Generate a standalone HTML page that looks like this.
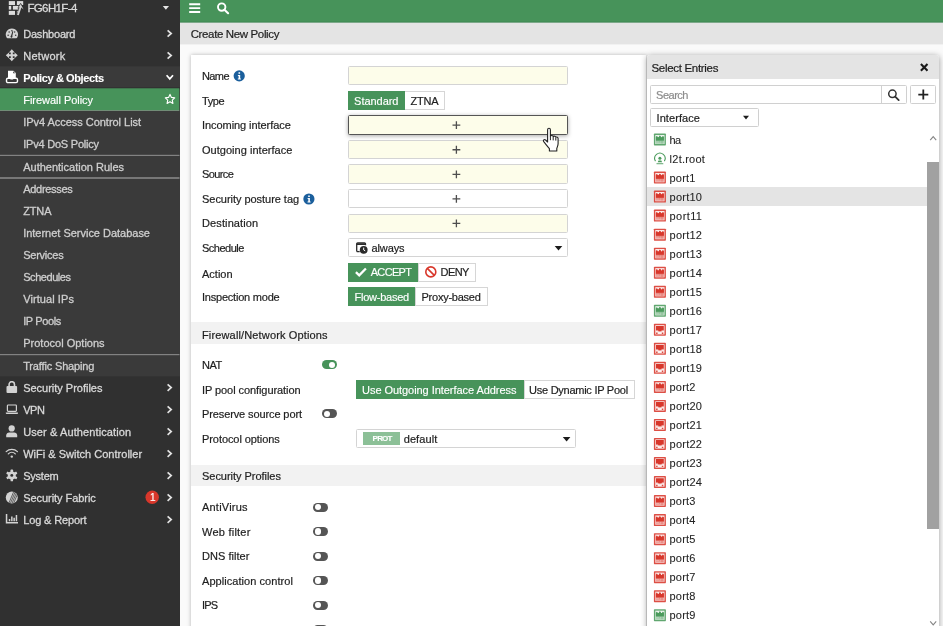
<!DOCTYPE html>
<html><head><meta charset="utf-8"><title>FortiGate - Create New Policy</title>
<style>
*{box-sizing:border-box;margin:0;padding:0}
html,body{width:943px;height:626px;overflow:hidden;background:#fafafa}
body{font-family:"Liberation Sans",sans-serif;font-size:11px;line-height:11px;color:#1e1e1e;position:relative}
#w{position:absolute;left:0;top:0;width:943px;height:626px;will-change:transform}
.a{position:absolute}
.t{position:absolute;white-space:pre}
#card{position:absolute;left:191px;top:55px;width:454.5px;height:600px;background:#fff;box-shadow:0 0 4px rgba(0,0,0,.28)}
.box{position:absolute;left:348px;width:219.8px;height:19.2px;border:1px solid #d4d4d4;border-radius:1.5px;background:#fdfdea}
.box.w{background:#fff}
.pl{position:absolute;width:8px;height:8px}
.pl:before,.pl:after{content:"";position:absolute;background:#505050}
.pl:before{left:0;top:3.35px;width:8px;height:1.3px}
.pl:after{left:3.35px;top:0;width:1.3px;height:8px}
.b{position:absolute;height:18.9px;border:1px solid #d6d6d6;background:#fff}
.b.on{background:#47935a;border-color:#47935a}
.band{position:absolute;left:191px;width:454.5px;background:#f2f2f2}
.tg{position:absolute;width:14.6px;height:9px;border-radius:4.5px;background:#555}
.tg:after{content:"";position:absolute;left:1.5px;top:1.4px;width:6.2px;height:6.2px;border-radius:50%;background:#fff}
.tg.on{background:#47935a}
.tg.on:after{left:6.9px}
#panel{position:absolute;left:647px;top:55px;width:292px;height:600px;background:#fff;border-radius:3px 3px 0 0;box-shadow:0 1.5px 6px rgba(0,0,0,.38);overflow:hidden}
.ib{position:absolute;border:1px solid #d0d0d0;border-radius:1.5px;background:#fff}
</style></head>
<body>
<svg class="a" style="left:0;top:0;width:943px;height:626px" viewBox="0 0 943 626"><rect x="0" y="0" width="180" height="626" fill="#303030"/><rect x="0" y="66.30" width="180" height="310.10" fill="#3a3a3a"/><rect x="0" y="87.60" width="180" height="0.8" fill="#2a2a2a"/><rect x="0" y="88.30" width="179.300" height="22.00" fill="#47935a"/><rect x="0" y="110.20" width="179.300" height="0.8" fill="#7f9a84"/><rect x="0" y="154.80" width="179.500" height="1.2" fill="#828282"/><rect x="0" y="177.15" width="179.500" height="1.7" fill="#828282"/><rect x="0" y="354.00" width="179.500" height="1.2" fill="#828282"/><rect x="180" y="22.300" width="763" height="1.1" fill="#c4c4c4"/><rect x="180" y="0" width="763" height="22.300" fill="#47935a"/><rect x="180" y="21.700" width="763" height="0.700" fill="#3b8650"/><rect x="180" y="23.100" width="763" height="21.300" fill="#e4e4e4"/></svg>
<svg class="a" style="left:8px;top:1px;width:17px;height:15px" viewBox="-0.800 -0.100 17.000 15.000"><g fill="#dcdcdc"><rect x="0" y="0" width="6.200" height="3.900"/><rect x="8.100" y="0" width="6.300" height="3.900"/><rect x="0" y="4.800" width="2.400" height="3.700"/><rect x="4.100" y="4.800" width="6.100" height="3.700"/><rect x="0" y="9.800" width="6.200" height="4"/><rect x="8.100" y="9.800" width="2.300" height="4"/></g><path d="M9.300 13.900L11.900 6" fill="none" stroke="#303030" stroke-width="3"/><path d="M11.800 2.700L9.400 7l2.500-1 3.100 2.600z" fill="#303030" stroke="#303030" stroke-width="1.200" stroke-linejoin="round"/><path d="M9.100 13.900L11.900 5.600" fill="none" stroke="#d2d2d2" stroke-width="1.900"/><path d="M11.800 2.800L9.500 6.900l2.400-.9 2.900 2.400z" fill="#d2d2d2"/></svg>
<svg class="a" style="left:162px;top:6px;width:9px;height:5px" viewBox="-0.800 0.000 9.000 5.000"><path d="M0 0h6.200L3.100 3.800z" fill="#e6e6e6"/></svg>
<svg class="a" style="left:5px;top:28px;width:14px;height:12px" viewBox="-0.800 -0.500 14.000 12.000"><path d="M6.1 0A6.1 6.1 0 0 0 .9 9.3c.2.3.4.5.8.5h8.8c.4 0 .6-.2.8-.5A6.1 6.1 0 0 0 6.1 0z" fill="#d2d2d2"/><g fill="#303030"><circle cx="2.3" cy="6.7" r=".75"/><circle cx="3.3" cy="3.5" r=".75"/><circle cx="9.9" cy="6.7" r=".75"/><circle cx="8.9" cy="3.5" r=".7"/><circle cx="6.1" cy="2.2" r=".7"/><path d="M5.2 7.2l1.5-4.6.8.3-1 4.6a1 1 0 1 1-1.3-.3z"/></g></svg>
<svg class="a" style="left:166px;top:29px;width:8px;height:10px" viewBox="-0.600 -0.500 8.000 10.000"><path d="M1 .8L4.6 4 1 7.2" fill="none" stroke="#e2e2e2" stroke-width="1.7"/></svg>
<svg class="a" style="left:5px;top:49px;width:14px;height:14px" viewBox="-0.800 -0.300 14.000 14.000"><path d="M6 0l2.900 3.200H7v1.800h1.800V3.100L12 6 8.800 8.900V7H7v1.800h1.900L6 12 3.100 8.800H5V7H3.200v1.900L0 6l3.200-2.900V5H5V3.200H3.100z" fill="#d2d2d2"/></svg>
<svg class="a" style="left:166px;top:51px;width:8px;height:10px" viewBox="-0.600 -0.500 8.000 10.000"><path d="M1 .8L4.6 4 1 7.2" fill="none" stroke="#e2e2e2" stroke-width="1.7"/></svg>
<svg class="a" style="left:5px;top:70px;width:15px;height:15px" viewBox="-0.800 -0.700 15.000 15.000"><path d="M2.2 0h5.4l2.400 2.400v5.200H7.400v1.300H4.600V7.600H2.200z" fill="#fff"/><path d="M7.400.600v2h2z" fill="#3a3a3a"/><rect x=".7" y="7.600" width="11" height="4.300" rx="1.400" fill="none" stroke="#fff" stroke-width="1.400"/></svg>
<svg class="a" style="left:165px;top:74px;width:10px;height:8px" viewBox="-0.800 -0.300 10.000 8.000"><path d="M.8 1L4 4.600 7.200 1" fill="none" stroke="#fff" stroke-width="1.700"/></svg>
<svg class="a" style="left:164px;top:93px;width:13px;height:13px" viewBox="-0.190 -0.189 12.328 12.304"><path d="M5.500 1.100l1.350 2.900 3.100.4-2.300 2.150.6 3.100L5.500 8.100 2.750 9.650l.6-3.100L1.050 4.400l3.100-.4z" fill="none" stroke="#fff" stroke-width="1.100" stroke-linejoin="round"/></svg>
<svg class="a" style="left:6px;top:381px;width:13px;height:13px" viewBox="-0.500 0.000 13.000 13.000"><path d="M2.600 5.200V3.400a2.700 2.700 0 0 1 5.400 0v1.800" fill="none" stroke="#d2d2d2" stroke-width="1.600"/><rect x="0" y="5" width="10.600" height="7" rx="1" fill="#d2d2d2"/></svg>
<svg class="a" style="left:166px;top:383px;width:8px;height:10px" viewBox="-0.600 -0.600 8.000 10.000"><path d="M1 .8L4.6 4 1 7.2" fill="none" stroke="#e2e2e2" stroke-width="1.7"/></svg>
<svg class="a" style="left:5px;top:404px;width:14px;height:12px" viewBox="-0.800 -0.400 14.000 12.000"><rect x="1.600" y=".600" width="9" height="6.400" rx=".8" fill="none" stroke="#d2d2d2" stroke-width="1.200"/><path d="M0 8.200h12.200v.5c0 .6-.5 1-1 1H1c-.5 0-1-.4-1-1z" fill="#d2d2d2"/></svg>
<svg class="a" style="left:166px;top:405px;width:8px;height:10px" viewBox="-0.600 -0.600 8.000 10.000"><path d="M1 .8L4.6 4 1 7.2" fill="none" stroke="#e2e2e2" stroke-width="1.7"/></svg>
<svg class="a" style="left:6px;top:425px;width:13px;height:14px" viewBox="-0.200 -0.200 13.000 14.000"><circle cx="5.500" cy="3.200" r="3.100" fill="#d2d2d2"/><path d="M0 12V10.400C0 8.600 1.400 7.400 3 7.400h5c1.600 0 3 1.200 3 3V12z" fill="#d2d2d2"/></svg>
<svg class="a" style="left:166px;top:427px;width:8px;height:10px" viewBox="-0.600 -0.600 8.000 10.000"><path d="M1 .8L4.6 4 1 7.2" fill="none" stroke="#e2e2e2" stroke-width="1.7"/></svg>
<svg class="a" style="left:5px;top:448px;width:14px;height:11px" viewBox="-0.600 -0.400 14.000 11.000"><path d="M.600 3.200a8 8 0 0 1 11.200 0" fill="none" stroke="#d2d2d2" stroke-width="1.300" stroke-linecap="round"/><path d="M2.700 5.500a5 5 0 0 1 7 0" fill="none" stroke="#d2d2d2" stroke-width="1.300" stroke-linecap="round"/><circle cx="6.200" cy="8.200" r="1.200" fill="#d2d2d2"/></svg>
<svg class="a" style="left:166px;top:449px;width:8px;height:10px" viewBox="-0.600 -0.600 8.000 10.000"><path d="M1 .8L4.6 4 1 7.2" fill="none" stroke="#e2e2e2" stroke-width="1.7"/></svg>
<svg class="a" style="left:6px;top:469px;width:13px;height:14px" viewBox="-6.000 -6.400 13.448 14.000"><g fill="#d2d2d2"><circle r="4.100"/><rect id="t" x="-1.300" y="-6" width="2.600" height="12" rx=".6"/><use href="#t" transform="rotate(60)"/><use href="#t" transform="rotate(120)"/></g><circle r="1.500" fill="#303030"/></svg>
<svg class="a" style="left:166px;top:471px;width:8px;height:10px" viewBox="-0.600 -0.600 8.000 10.000"><path d="M1 .8L4.6 4 1 7.2" fill="none" stroke="#e2e2e2" stroke-width="1.7"/></svg>
<svg class="a" style="left:5px;top:491px;width:14px;height:14px" viewBox="-0.800 -0.400 14.000 14.000"><defs><clipPath id="cc"><circle cx="6" cy="6" r="6"/></clipPath></defs><circle cx="6" cy="6" r="6" fill="#d2d2d2"/><g clip-path="url(#cc)" stroke="#303030" stroke-width=".7"><path d="M3 12L8 0M4.600 12L9.600 0M6.200 12L11.200 0M7.800 12L12.800 0"/></g></svg>
<svg class="a" style="left:145px;top:490px;width:15px;height:15px" viewBox="-0.500 -0.500 15.000 15.000"><circle cx="6.700" cy="6.700" r="6.700" fill="#d8372b"/></svg>
<svg class="a" style="left:166px;top:493px;width:8px;height:10px" viewBox="-0.600 -0.600 8.000 10.000"><path d="M1 .8L4.6 4 1 7.2" fill="none" stroke="#e2e2e2" stroke-width="1.7"/></svg>
<svg class="a" style="left:5px;top:514px;width:14px;height:11px" viewBox="-0.800 0.000 14.000 11.000"><path d="M0 0h1.500v8.100h10.700v1.500H0z" fill="#d2d2d2"/><path d="M3 5h1.500v2.200H3zM5.300 2.600h1.500v4.600H5.300zM7.600 3.800h1.500v3.400H7.600zM9.900 1h1.500v6.200H9.900z" fill="#d2d2d2"/></svg>
<svg class="a" style="left:166px;top:515px;width:8px;height:10px" viewBox="-0.600 -0.600 8.000 10.000"><path d="M1 .8L4.6 4 1 7.2" fill="none" stroke="#e2e2e2" stroke-width="1.7"/></svg>
<svg class="a" style="left:189px;top:3px;width:13px;height:11px" viewBox="-0.200 -0.300 13.000 11.000"><path d="M0 0h11v1.900H0zM0 3.850h11v1.900H0zM0 7.700h11v1.900H0z" fill="#fff"/></svg><svg class="a" style="left:217px;top:2px;width:13px;height:13px" viewBox="0.000 -0.400 13.000 13.000"><circle cx="4.700" cy="4.700" r="3.700" fill="none" stroke="#fff" stroke-width="1.900"/><path d="M7.400 7.300l3.700 3.500" stroke="#fff" stroke-width="2.100" stroke-linecap="round"/></svg>
<div id="card"></div>
<svg class="a" style="left:233px;top:70px;width:13px;height:13px" viewBox="-0.600 -0.300 13.000 13.000"><circle cx="5.600" cy="5.600" r="5.600" fill="#1b5f9c"/><path d="M4.900 2h1.600v1.500H4.900zM4.300 4.600h2.300v3.500h.7v1H4.200v-1h.8V5.600h-.7z" fill="#fff"/></svg>
<svg class="a" style="left:303px;top:193px;width:13px;height:13px" viewBox="-0.300 -0.400 13.000 13.000"><circle cx="5.600" cy="5.600" r="5.600" fill="#1b5f9c"/><path d="M4.900 2h1.600v1.500H4.900zM4.300 4.600h2.300v3.500h.7v1H4.200v-1h.8V5.600h-.7z" fill="#fff"/></svg>
<div class="box" style="top:66.20px;"></div>
<div class="b" style="left:404.4px;top:91.30px;width:40.3px;height:18.9px"></div>
<div class="b on" style="left:348.1px;top:91.30px;width:56.5px;height:18.9px"></div>
<div class="box" style="top:115.200px;height:19.500px;border-color:#555;box-shadow:0 1px 4px rgba(0,0,0,.34)"></div>
<div class="box" style="top:139.88px;"></div>
<div class="box" style="top:164.44px;"></div>
<div class="box w" style="top:189.00px;"></div>
<div class="box" style="top:213.56px;"></div>
<svg class="a" style="left:452px;top:121px;width:10px;height:10px" viewBox="-0.500 -0.300 10.000 10.000"><path d="M3.900 0v7.800M0 3.900h7.800" stroke="#4e4e4e" stroke-width="1.300"/></svg>
<svg class="a" style="left:452px;top:145px;width:10px;height:10px" viewBox="-0.500 -0.860 10.000 10.000"><path d="M3.900 0v7.800M0 3.900h7.800" stroke="#4e4e4e" stroke-width="1.300"/></svg>
<svg class="a" style="left:452px;top:170px;width:10px;height:10px" viewBox="-0.500 -0.420 10.000 10.000"><path d="M3.900 0v7.800M0 3.900h7.800" stroke="#4e4e4e" stroke-width="1.300"/></svg>
<svg class="a" style="left:452px;top:194px;width:10px;height:10px" viewBox="-0.500 -0.980 10.000 10.000"><path d="M3.900 0v7.800M0 3.900h7.800" stroke="#4e4e4e" stroke-width="1.300"/></svg>
<svg class="a" style="left:452px;top:219px;width:10px;height:10px" viewBox="-0.500 -0.540 10.000 10.000"><path d="M3.900 0v7.800M0 3.900h7.800" stroke="#4e4e4e" stroke-width="1.300"/></svg>
<div class="box w" style="top:238.12px;"></div>
<svg class="a" style="left:356px;top:242px;width:13px;height:13px" viewBox="-0.100 -0.200 13.000 13.000"><path d="M.6 9.400V1.600c0-.6.4-1 1-1h6.800c.6 0 1 .4 1 1V3" fill="none" stroke="#2a2a2a" stroke-width="1.300"/><path d="M.6 1h8.800v1.800H.6z" fill="#2a2a2a"/><path d="M.6 9.400h3" stroke="#2a2a2a" stroke-width="1.300"/><circle cx="7.600" cy="7.600" r="3.900" fill="#2a2a2a"/><path d="M7.600 5.400v2.400l1.500.9" fill="none" stroke="#fff" stroke-width="1"/></svg>
<svg class="a" style="left:554px;top:246px;width:10px;height:6px" viewBox="-0.700 0.000 10.000 6.000"><path d="M0 0h7.600L3.800 4.400z" fill="#1c1c1c"/></svg>
<div class="b" style="left:418.2px;top:262.70px;width:57.5px;height:18.9px"></div>
<div class="b on" style="left:348.1px;top:262.70px;width:70.3px;height:18.9px"></div>
<svg class="a" style="left:354px;top:267px;width:15px;height:11px" viewBox="-0.600 -0.300 15.000 11.000"><path d="M1.300 4.900l3.300 3.100 6.700-6.800" fill="none" stroke="#fff" stroke-width="2.300"/></svg>
<svg class="a" style="left:424px;top:265px;width:14px;height:14px" viewBox="-0.800 -0.900 14.000 14.000"><circle cx="6" cy="6" r="5" fill="none" stroke="#d8372b" stroke-width="1.600"/><path d="M2.500 2.500l7 7" stroke="#d8372b" stroke-width="1.600"/></svg>
<div class="b" style="left:415.3px;top:287.40px;width:72.3px;height:18.9px"></div>
<div class="b on" style="left:348.1px;top:287.40px;width:67.4px;height:18.9px"></div>
<div class="band" style="top:322.100px;height:21.900px"></div>
<div class="band" style="top:464.600px;height:21.500px"></div>
<div class="tg on" style="left:322.200px;top:360.300px"></div>
<div class="b" style="left:523.8px;top:380.20px;width:110.9px;height:18.9px"></div>
<div class="b on" style="left:356.2px;top:380.20px;width:167.8px;height:18.9px"></div>
<div class="tg" style="left:322.200px;top:409.400px"></div>
<div class="box w" style="left:356.200px;width:219.400px;top:429.300px;height:19px"></div>
<div class="a" style="left:363.100px;top:432.300px;width:36.900px;height:12.900px;background:#8cc097"></div>
<svg class="a" style="left:562px;top:437px;width:10px;height:6px" viewBox="-0.800 0.000 10.000 6.000"><path d="M0 0h7.600L3.800 4.400z" fill="#1c1c1c"/></svg>
<div class="tg" style="left:313.100px;top:502.50px"></div>
<div class="tg" style="left:313.100px;top:527.00px"></div>
<div class="tg" style="left:313.100px;top:551.50px"></div>
<div class="tg" style="left:313.100px;top:576.00px"></div>
<div class="tg" style="left:313.100px;top:600.50px"></div>
<div class="tg" style="left:313.100px;top:625.00px"></div>
<div id="panel">
<div class="a" style="left:0.00px;top:0.00px;width:293px;height:23.600px;background:#e4e4e4"></div>
<svg class="a" style="left:272px;top:8px;width:11px;height:10px" viewBox="-0.900 -0.100 11.000 10.000"><path d="M1 1l6.600 6.600M7.600 1L1 7.600" stroke="#1a1a1a" stroke-width="2.100"/></svg>
<div class="ib" style="left:2.90px;top:30.00px;width:257px;height:18.800px"><div class="a" style="left:230.400px;top:0;width:1px;height:100%;background:#d0d0d0"></div><svg class="a" style="left:236px;top:3px;width:14px;height:13px" viewBox="-0.600 0.000 14.000 13.000"><circle cx="4.800" cy="4.800" r="3.700" fill="none" stroke="#333" stroke-width="1.500"/><path d="M7.600 7.600l3.500 3.500" stroke="#333" stroke-width="1.800" stroke-linecap="round"/></svg></div>
<div class="ib" style="left:263.40px;top:30.00px;width:25.200px;height:18.800px"><svg class="a" style="left:7px;top:3px;width:12px;height:12px" viewBox="-0.300 -0.600 12.000 12.000"><path d="M5 0v10M0 5h10" stroke="#222" stroke-width="1.800"/></svg></div>
<div class="ib" style="left:2.90px;top:53.40px;width:109.400px;height:18.400px"><svg class="a" style="left:92px;top:6px;width:7px;height:6px" viewBox="0.000 -0.800 7.000 6.000"><path d="M0 0h6L3 3.600z" fill="#1c1c1c"/></svg></div>
<svg class="a" style="left:6px;top:78px;width:14px;height:14px" viewBox="-0.900 -0.500 14.000 14.000"><rect width="12" height="12" rx=".7" fill="#4b9b5c" opacity=".88"/><path d="M1.400 1.400h9.200v9.200H1.400z" fill="#fff" opacity=".88"/><path d="M2 10.200V3.500l1-1.100.900 1.300h.900l.400-.800.800-.800.800.800.400.800h.900l.900-1.300 1 1.100v6.700z" fill="#4b9b5c" opacity=".62"/><path d="M2 7.100V3.500l1-1.100.900 1.300h.900l.400-.800.800-.800.800.800.400.800h.900l.900-1.300 1 1.100v3.600z" fill="#4b9b5c"/><path d="M2 8.400h3.400M5.900 8.400h1.300M7.700 8.400h.8M9 8.400h1M2 9.600h5.200M7.700 9.600h.8M9 9.600h1" stroke="#fff" stroke-width=".55" opacity=".7"/></svg>
<svg class="a" style="left:6px;top:97px;width:14px;height:14px" viewBox="-0.900 -0.530 14.000 14.000"><path d="M1.600 8.600A5.200 5.200 0 1 1 10.400 8.600" fill="none" stroke="#4b9b5c" stroke-width="1.100"/><circle cx="6" cy="5.600" r="1.500" fill="#4b9b5c"/><path d="M3.800 9.600l.8-1.600h2.800l.8 1.600z" fill="#4b9b5c"/><path d="M2.600 11.200h6.800" stroke="#4b9b5c" stroke-width=".9"/></svg>
<svg class="a" style="left:6px;top:116px;width:14px;height:14px" viewBox="-0.900 -0.560 14.000 14.000"><rect width="12" height="12" rx=".7" fill="#d8372b" opacity=".88"/><path d="M1.400 1.400h9.200v9.200H1.400z" fill="#fff" opacity=".88"/><path d="M2 10.200V3.500l1-1.100.900 1.300h.900l.400-.800.800-.800.800.800.400.800h.900l.900-1.300 1 1.100v6.700z" fill="#d8372b" opacity=".62"/><path d="M2 7.100V3.500l1-1.100.900 1.300h.900l.400-.800.800-.800.800.800.400.800h.900l.900-1.300 1 1.100v3.600z" fill="#d8372b"/><path d="M2 8.400h3.400M5.900 8.400h1.300M7.700 8.400h.8M9 8.400h1M2 9.600h5.200M7.700 9.600h.8M9 9.600h1" stroke="#fff" stroke-width=".55" opacity=".7"/></svg>
<div class="a" style="left:-0.50px;top:132.29px;width:281px;height:18.500px;background:#e4e4e4"></div>
<svg class="a" style="left:6px;top:135px;width:14px;height:14px" viewBox="-0.900 -0.590 14.000 14.000"><rect width="12" height="12" rx=".7" fill="#d8372b" opacity=".88"/><path d="M1.400 1.400h9.200v9.200H1.400z" fill="#fff" opacity=".88"/><path d="M2 10.200V3.500l1-1.100.900 1.300h.900l.400-.800.800-.800.800.800.400.800h.900l.900-1.300 1 1.100v6.700z" fill="#d8372b" opacity=".62"/><path d="M2 7.100V3.500l1-1.100.900 1.300h.900l.400-.800.800-.800.800.800.400.800h.900l.900-1.300 1 1.100v3.600z" fill="#d8372b"/><path d="M2 8.400h3.400M5.900 8.400h1.300M7.700 8.400h.8M9 8.400h1M2 9.600h5.200M7.700 9.600h.8M9 9.600h1" stroke="#fff" stroke-width=".55" opacity=".7"/></svg>
<svg class="a" style="left:6px;top:154px;width:14px;height:14px" viewBox="-0.900 -0.620 14.000 14.000"><rect width="12" height="12" rx=".7" fill="#d8372b" opacity=".88"/><path d="M1.400 1.400h9.200v9.200H1.400z" fill="#fff" opacity=".88"/><path d="M2 10.200V3.500l1-1.100.900 1.300h.900l.400-.800.800-.800.800.800.400.800h.900l.900-1.300 1 1.100v6.700z" fill="#d8372b" opacity=".62"/><path d="M2 7.100V3.500l1-1.100.900 1.300h.900l.400-.800.800-.800.800.800.400.800h.900l.900-1.300 1 1.100v3.600z" fill="#d8372b"/><path d="M2 8.400h3.400M5.900 8.400h1.300M7.700 8.400h.8M9 8.400h1M2 9.600h5.200M7.700 9.600h.8M9 9.600h1" stroke="#fff" stroke-width=".55" opacity=".7"/></svg>
<svg class="a" style="left:6px;top:173px;width:14px;height:14px" viewBox="-0.900 -0.650 14.000 14.000"><rect width="12" height="12" rx=".7" fill="#d8372b" opacity=".88"/><path d="M1.400 1.400h9.200v9.200H1.400z" fill="#fff" opacity=".88"/><path d="M2 10.200V3.500l1-1.100.900 1.300h.900l.400-.800.800-.800.800.800.400.800h.900l.900-1.300 1 1.100v6.700z" fill="#d8372b" opacity=".62"/><path d="M2 7.100V3.500l1-1.100.900 1.300h.900l.400-.800.800-.800.800.800.400.800h.900l.900-1.300 1 1.100v3.600z" fill="#d8372b"/><path d="M2 8.400h3.400M5.900 8.400h1.300M7.700 8.400h.8M9 8.400h1M2 9.600h5.200M7.700 9.600h.8M9 9.600h1" stroke="#fff" stroke-width=".55" opacity=".7"/></svg>
<svg class="a" style="left:6px;top:192px;width:14px;height:14px" viewBox="-0.900 -0.680 14.000 14.000"><rect width="12" height="12" rx=".7" fill="#d8372b" opacity=".88"/><path d="M1.400 1.400h9.200v9.200H1.400z" fill="#fff" opacity=".88"/><path d="M2 10.200V3.500l1-1.100.900 1.300h.900l.400-.800.800-.800.800.800.400.800h.900l.900-1.300 1 1.100v6.700z" fill="#d8372b" opacity=".62"/><path d="M2 7.100V3.500l1-1.100.900 1.300h.900l.400-.800.800-.800.800.800.400.800h.900l.900-1.300 1 1.100v3.600z" fill="#d8372b"/><path d="M2 8.400h3.400M5.900 8.400h1.300M7.700 8.400h.8M9 8.400h1M2 9.600h5.200M7.700 9.600h.8M9 9.600h1" stroke="#fff" stroke-width=".55" opacity=".7"/></svg>
<svg class="a" style="left:6px;top:211px;width:14px;height:14px" viewBox="-0.900 -0.710 14.000 14.000"><rect width="12" height="12" rx=".7" fill="#d8372b" opacity=".88"/><path d="M1.400 1.400h9.200v9.200H1.400z" fill="#fff" opacity=".88"/><path d="M2 10.200V3.500l1-1.100.900 1.300h.900l.400-.800.800-.800.800.800.400.800h.900l.900-1.300 1 1.100v6.700z" fill="#d8372b" opacity=".62"/><path d="M2 7.100V3.500l1-1.100.900 1.300h.900l.400-.800.800-.800.800.800.400.800h.900l.900-1.300 1 1.100v3.600z" fill="#d8372b"/><path d="M2 8.400h3.400M5.900 8.400h1.300M7.700 8.400h.8M9 8.400h1M2 9.600h5.200M7.700 9.600h.8M9 9.600h1" stroke="#fff" stroke-width=".55" opacity=".7"/></svg>
<svg class="a" style="left:6px;top:230px;width:14px;height:14px" viewBox="-0.900 -0.740 14.000 14.000"><rect width="12" height="12" rx=".7" fill="#d8372b" opacity=".88"/><path d="M1.400 1.400h9.200v9.200H1.400z" fill="#fff" opacity=".88"/><path d="M2 10.200V3.500l1-1.100.900 1.300h.900l.400-.800.800-.800.800.800.400.800h.900l.900-1.300 1 1.100v6.700z" fill="#d8372b" opacity=".62"/><path d="M2 7.100V3.500l1-1.100.900 1.300h.900l.400-.800.800-.800.800.800.400.800h.900l.900-1.300 1 1.100v3.600z" fill="#d8372b"/><path d="M2 8.400h3.400M5.900 8.400h1.300M7.700 8.400h.8M9 8.400h1M2 9.600h5.200M7.700 9.600h.8M9 9.600h1" stroke="#fff" stroke-width=".55" opacity=".7"/></svg>
<svg class="a" style="left:6px;top:249px;width:14px;height:14px" viewBox="-0.900 -0.770 14.000 14.000"><rect width="12" height="12" rx=".7" fill="#4b9b5c" opacity=".88"/><path d="M1.400 1.400h9.200v9.200H1.400z" fill="#fff" opacity=".88"/><path d="M2 10.200V3.500l1-1.100.900 1.300h.900l.400-.800.800-.800.800.800.400.800h.900l.900-1.300 1 1.100v6.700z" fill="#4b9b5c" opacity=".62"/><path d="M2 7.100V3.500l1-1.100.900 1.300h.900l.400-.800.800-.800.800.800.400.800h.900l.900-1.300 1 1.100v3.600z" fill="#4b9b5c"/><path d="M2 8.400h3.400M5.900 8.400h1.300M7.700 8.400h.8M9 8.400h1M2 9.600h5.200M7.700 9.600h.8M9 9.600h1" stroke="#fff" stroke-width=".55" opacity=".7"/></svg>
<svg class="a" style="left:6px;top:268px;width:14px;height:14px" viewBox="-0.900 -0.800 14.000 14.000"><rect width="12" height="12" rx=".7" fill="#d8372b" opacity=".88"/><path d="M1.400 1.400h9.200v9.200H1.400z" fill="#fff" opacity=".92"/><path d="M2.100 2.100h7.800v4.300H8.300Q6 8.300 3.700 6.400H2.100z" fill="#d8372b"/><path d="M2.100 6.400h1.600Q6 8.300 8.300 6.400h1.600v.9l-1.200-.1Q6 9.300 3.300 7.200l-1.200.1z" fill="#d8372b" opacity=".4"/><path d="M2.200 8.700h1.500v1.400H2.200zM7.900 8.700h1.500v1.400H7.900z" fill="#d8372b" opacity=".9"/></svg>
<svg class="a" style="left:6px;top:287px;width:14px;height:14px" viewBox="-0.900 -0.830 14.000 14.000"><rect width="12" height="12" rx=".7" fill="#d8372b" opacity=".88"/><path d="M1.400 1.400h9.200v9.200H1.400z" fill="#fff" opacity=".92"/><path d="M2.100 2.100h7.800v4.300H8.300Q6 8.300 3.700 6.400H2.100z" fill="#d8372b"/><path d="M2.100 6.400h1.600Q6 8.300 8.300 6.400h1.600v.9l-1.200-.1Q6 9.300 3.300 7.200l-1.200.1z" fill="#d8372b" opacity=".4"/><path d="M2.200 8.700h1.500v1.400H2.200zM7.900 8.700h1.500v1.400H7.900z" fill="#d8372b" opacity=".9"/></svg>
<svg class="a" style="left:6px;top:306px;width:14px;height:14px" viewBox="-0.900 -0.860 14.000 14.000"><rect width="12" height="12" rx=".7" fill="#d8372b" opacity=".88"/><path d="M1.400 1.400h9.200v9.200H1.400z" fill="#fff" opacity=".92"/><path d="M2.100 2.100h7.800v4.300H8.300Q6 8.300 3.700 6.400H2.100z" fill="#d8372b"/><path d="M2.100 6.400h1.600Q6 8.300 8.300 6.400h1.600v.9l-1.200-.1Q6 9.300 3.300 7.200l-1.200.1z" fill="#d8372b" opacity=".4"/><path d="M2.200 8.700h1.500v1.400H2.200zM7.900 8.700h1.500v1.400H7.900z" fill="#d8372b" opacity=".9"/></svg>
<svg class="a" style="left:6px;top:325px;width:14px;height:14px" viewBox="-0.900 -0.890 14.000 14.000"><rect width="12" height="12" rx=".7" fill="#d8372b" opacity=".88"/><path d="M1.400 1.400h9.200v9.200H1.400z" fill="#fff" opacity=".88"/><path d="M2 10.200V3.500l1-1.100.900 1.300h.900l.400-.800.800-.800.800.800.400.800h.900l.900-1.300 1 1.100v6.700z" fill="#d8372b" opacity=".62"/><path d="M2 7.100V3.500l1-1.100.900 1.300h.900l.400-.800.800-.800.800.800.400.800h.900l.900-1.300 1 1.100v3.600z" fill="#d8372b"/><path d="M2 8.400h3.400M5.900 8.400h1.300M7.700 8.400h.8M9 8.400h1M2 9.600h5.200M7.700 9.600h.8M9 9.600h1" stroke="#fff" stroke-width=".55" opacity=".7"/></svg>
<svg class="a" style="left:6px;top:344px;width:14px;height:14px" viewBox="-0.900 -0.920 14.000 14.000"><rect width="12" height="12" rx=".7" fill="#d8372b" opacity=".88"/><path d="M1.400 1.400h9.200v9.200H1.400z" fill="#fff" opacity=".92"/><path d="M2.100 2.100h7.800v4.300H8.300Q6 8.300 3.700 6.400H2.100z" fill="#d8372b"/><path d="M2.100 6.400h1.600Q6 8.300 8.300 6.400h1.600v.9l-1.200-.1Q6 9.300 3.300 7.200l-1.200.1z" fill="#d8372b" opacity=".4"/><path d="M2.200 8.700h1.500v1.400H2.200zM7.900 8.700h1.500v1.400H7.900z" fill="#d8372b" opacity=".9"/></svg>
<svg class="a" style="left:6px;top:363px;width:14px;height:14px" viewBox="-0.900 -0.950 14.000 14.000"><rect width="12" height="12" rx=".7" fill="#d8372b" opacity=".88"/><path d="M1.400 1.400h9.200v9.200H1.400z" fill="#fff" opacity=".92"/><path d="M2.100 2.100h7.800v4.300H8.300Q6 8.300 3.700 6.400H2.100z" fill="#d8372b"/><path d="M2.100 6.400h1.600Q6 8.300 8.300 6.400h1.600v.9l-1.200-.1Q6 9.300 3.300 7.200l-1.200.1z" fill="#d8372b" opacity=".4"/><path d="M2.200 8.700h1.500v1.400H2.200zM7.900 8.700h1.500v1.400H7.900z" fill="#d8372b" opacity=".9"/></svg>
<svg class="a" style="left:6px;top:382px;width:14px;height:14px" viewBox="-0.900 -0.980 14.000 14.000"><rect width="12" height="12" rx=".7" fill="#d8372b" opacity=".88"/><path d="M1.400 1.400h9.200v9.200H1.400z" fill="#fff" opacity=".92"/><path d="M2.100 2.100h7.800v4.300H8.300Q6 8.300 3.700 6.400H2.100z" fill="#d8372b"/><path d="M2.100 6.400h1.600Q6 8.300 8.300 6.400h1.600v.9l-1.200-.1Q6 9.300 3.300 7.200l-1.200.1z" fill="#d8372b" opacity=".4"/><path d="M2.200 8.700h1.500v1.400H2.200zM7.900 8.700h1.500v1.400H7.900z" fill="#d8372b" opacity=".9"/></svg>
<svg class="a" style="left:6px;top:402px;width:14px;height:14px" viewBox="-0.900 -0.010 14.000 14.000"><rect width="12" height="12" rx=".7" fill="#d8372b" opacity=".88"/><path d="M1.400 1.400h9.200v9.200H1.400z" fill="#fff" opacity=".92"/><path d="M2.100 2.100h7.800v4.300H8.300Q6 8.300 3.700 6.400H2.100z" fill="#d8372b"/><path d="M2.100 6.400h1.600Q6 8.300 8.300 6.400h1.600v.9l-1.200-.1Q6 9.300 3.300 7.200l-1.200.1z" fill="#d8372b" opacity=".4"/><path d="M2.200 8.700h1.500v1.400H2.200zM7.900 8.700h1.500v1.400H7.900z" fill="#d8372b" opacity=".9"/></svg>
<svg class="a" style="left:6px;top:421px;width:14px;height:14px" viewBox="-0.900 -0.040 14.000 14.000"><rect width="12" height="12" rx=".7" fill="#d8372b" opacity=".88"/><path d="M1.400 1.400h9.200v9.200H1.400z" fill="#fff" opacity=".92"/><path d="M2.100 2.100h7.800v4.300H8.300Q6 8.300 3.700 6.400H2.100z" fill="#d8372b"/><path d="M2.100 6.400h1.600Q6 8.300 8.300 6.400h1.600v.9l-1.200-.1Q6 9.300 3.300 7.200l-1.200.1z" fill="#d8372b" opacity=".4"/><path d="M2.200 8.700h1.500v1.400H2.200zM7.900 8.700h1.500v1.400H7.900z" fill="#d8372b" opacity=".9"/></svg>
<svg class="a" style="left:6px;top:440px;width:14px;height:14px" viewBox="-0.900 -0.070 14.000 14.000"><rect width="12" height="12" rx=".7" fill="#d8372b" opacity=".88"/><path d="M1.400 1.400h9.200v9.200H1.400z" fill="#fff" opacity=".88"/><path d="M2 10.200V3.500l1-1.100.900 1.300h.900l.400-.800.800-.800.800.800.400.800h.900l.900-1.300 1 1.100v6.700z" fill="#d8372b" opacity=".62"/><path d="M2 7.100V3.500l1-1.100.900 1.300h.900l.400-.800.800-.800.800.800.400.800h.900l.900-1.300 1 1.100v3.600z" fill="#d8372b"/><path d="M2 8.400h3.400M5.900 8.400h1.300M7.700 8.400h.8M9 8.400h1M2 9.600h5.200M7.700 9.600h.8M9 9.600h1" stroke="#fff" stroke-width=".55" opacity=".7"/></svg>
<svg class="a" style="left:6px;top:459px;width:14px;height:14px" viewBox="-0.900 -0.100 14.000 14.000"><rect width="12" height="12" rx=".7" fill="#d8372b" opacity=".88"/><path d="M1.400 1.400h9.200v9.200H1.400z" fill="#fff" opacity=".88"/><path d="M2 10.200V3.500l1-1.100.900 1.300h.900l.400-.800.800-.800.800.800.400.800h.900l.900-1.300 1 1.100v6.700z" fill="#d8372b" opacity=".62"/><path d="M2 7.100V3.500l1-1.100.900 1.300h.900l.400-.800.800-.800.800.800.400.800h.900l.900-1.300 1 1.100v3.600z" fill="#d8372b"/><path d="M2 8.400h3.400M5.900 8.400h1.300M7.700 8.400h.8M9 8.400h1M2 9.600h5.200M7.700 9.600h.8M9 9.600h1" stroke="#fff" stroke-width=".55" opacity=".7"/></svg>
<svg class="a" style="left:6px;top:478px;width:14px;height:14px" viewBox="-0.900 -0.130 14.000 14.000"><rect width="12" height="12" rx=".7" fill="#d8372b" opacity=".88"/><path d="M1.400 1.400h9.200v9.200H1.400z" fill="#fff" opacity=".88"/><path d="M2 10.200V3.500l1-1.100.900 1.300h.900l.400-.800.800-.800.800.800.400.800h.900l.900-1.300 1 1.100v6.700z" fill="#d8372b" opacity=".62"/><path d="M2 7.100V3.500l1-1.100.900 1.300h.900l.400-.800.800-.800.800.800.400.800h.900l.900-1.300 1 1.100v3.600z" fill="#d8372b"/><path d="M2 8.400h3.400M5.900 8.400h1.300M7.700 8.400h.8M9 8.400h1M2 9.600h5.200M7.700 9.600h.8M9 9.600h1" stroke="#fff" stroke-width=".55" opacity=".7"/></svg>
<svg class="a" style="left:6px;top:497px;width:14px;height:14px" viewBox="-0.900 -0.160 14.000 14.000"><rect width="12" height="12" rx=".7" fill="#d8372b" opacity=".88"/><path d="M1.400 1.400h9.200v9.200H1.400z" fill="#fff" opacity=".88"/><path d="M2 10.200V3.500l1-1.100.900 1.300h.900l.400-.800.800-.800.800.800.400.800h.900l.900-1.300 1 1.100v6.700z" fill="#d8372b" opacity=".62"/><path d="M2 7.100V3.500l1-1.100.900 1.300h.900l.400-.800.800-.800.800.800.400.800h.900l.900-1.300 1 1.100v3.600z" fill="#d8372b"/><path d="M2 8.400h3.400M5.900 8.400h1.300M7.700 8.400h.8M9 8.400h1M2 9.600h5.200M7.700 9.600h.8M9 9.600h1" stroke="#fff" stroke-width=".55" opacity=".7"/></svg>
<svg class="a" style="left:6px;top:516px;width:14px;height:14px" viewBox="-0.900 -0.190 14.000 14.000"><rect width="12" height="12" rx=".7" fill="#d8372b" opacity=".88"/><path d="M1.400 1.400h9.200v9.200H1.400z" fill="#fff" opacity=".88"/><path d="M2 10.200V3.500l1-1.100.900 1.300h.900l.400-.800.800-.800.800.800.400.800h.900l.900-1.300 1 1.100v6.700z" fill="#d8372b" opacity=".62"/><path d="M2 7.100V3.500l1-1.100.900 1.300h.900l.400-.800.800-.800.800.800.400.800h.900l.900-1.300 1 1.100v3.600z" fill="#d8372b"/><path d="M2 8.400h3.400M5.900 8.400h1.300M7.700 8.400h.8M9 8.400h1M2 9.600h5.200M7.700 9.600h.8M9 9.600h1" stroke="#fff" stroke-width=".55" opacity=".7"/></svg>
<svg class="a" style="left:6px;top:535px;width:14px;height:14px" viewBox="-0.900 -0.220 14.000 14.000"><rect width="12" height="12" rx=".7" fill="#d8372b" opacity=".88"/><path d="M1.400 1.400h9.200v9.200H1.400z" fill="#fff" opacity=".88"/><path d="M2 10.200V3.500l1-1.100.900 1.300h.900l.400-.800.800-.800.800.800.400.800h.900l.900-1.300 1 1.100v6.700z" fill="#d8372b" opacity=".62"/><path d="M2 7.100V3.500l1-1.100.900 1.300h.900l.400-.800.800-.800.800.800.400.800h.900l.900-1.300 1 1.100v3.600z" fill="#d8372b"/><path d="M2 8.400h3.400M5.900 8.400h1.300M7.700 8.400h.8M9 8.400h1M2 9.600h5.200M7.700 9.600h.8M9 9.600h1" stroke="#fff" stroke-width=".55" opacity=".7"/></svg>
<svg class="a" style="left:6px;top:554px;width:14px;height:14px" viewBox="-0.900 -0.250 14.000 14.000"><rect width="12" height="12" rx=".7" fill="#4b9b5c" opacity=".88"/><path d="M1.400 1.400h9.200v9.200H1.400z" fill="#fff" opacity=".88"/><path d="M2 10.200V3.500l1-1.100.900 1.300h.900l.400-.800.800-.800.800.800.400.800h.900l.900-1.300 1 1.100v6.700z" fill="#4b9b5c" opacity=".62"/><path d="M2 7.100V3.500l1-1.100.900 1.300h.900l.400-.800.800-.800.800.800.400.800h.900l.900-1.300 1 1.100v3.600z" fill="#4b9b5c"/><path d="M2 8.400h3.400M5.900 8.400h1.300M7.700 8.400h.8M9 8.400h1M2 9.600h5.200M7.700 9.600h.8M9 9.600h1" stroke="#fff" stroke-width=".55" opacity=".7"/></svg>
<div class="a" style="left:280.00px;top:106.90px;width:12px;height:367.300px;background:#a1a1a1"></div>
<svg class="a" style="left:282px;top:80px;width:9px;height:7px" viewBox="-0.700 -0.700 9.000 7.000"><path d="M.5 4.400L3.500 1l3 3.400" fill="none" stroke="#858585" stroke-width="1.100"/></svg>
<svg class="a" style="left:282px;top:565px;width:9px;height:7px" viewBox="-0.700 -0.800 9.000 7.000"><path d="M.5 .6L3.500 4l3-3.400" fill="none" stroke="#858585" stroke-width="1.100"/></svg>
</div>
<svg class="a" style="left:542px;top:127px;width:19px;height:26px" viewBox="-0.400 -0.400 19.000 26.000"><path d="M5.200 14.600V2.400c0-2 2.800-2 2.800 0v6.400c.6-1 2.600-.8 2.800.4.8-.8 2.400-.5 2.600.7.900-.6 2.300 0 2.300 1.300v5c0 2-.9 3.400-1.300 4.800v2.600H7v-2.300C5.600 19.500 3 16.400 1.300 14.300.3 13 1.800 11.500 3.200 12.600z" fill="#fff" stroke="#222" stroke-width="1.100" stroke-linejoin="round"/><path d="M8 8.800v4M10.800 9.600v3.400M13.400 10.400v2.800" stroke="#222" stroke-width="1"/></svg>
<div id="w">
<span class="t" style="left:27.4px;top:3px;color:#dadada;font-size:11.5px;line-height:11.5px;letter-spacing:-0.618px;-webkit-text-stroke:.3px;">FG6H1F-4</span>
<span class="t" style="left:23.2px;top:29px;color:#d8d8d8;letter-spacing:-0.204px;-webkit-text-stroke:.3px;">Dashboard</span>
<span class="t" style="left:23.2px;top:51px;color:#d8d8d8;letter-spacing:0.293px;-webkit-text-stroke:.3px;">Network</span>
<span class="t" style="left:23.2px;top:73px;color:#fff;font-weight:700;letter-spacing:-0.394px;-webkit-text-stroke:.1px;">Policy &amp; Objects</span>
<span class="t" style="left:23.2px;top:95px;color:#fff;letter-spacing:-0.028px;-webkit-text-stroke:.15px;">Firewall Policy</span>
<span class="t" style="left:23.2px;top:117px;color:#cecece;letter-spacing:-0.031px;-webkit-text-stroke:.3px;">IPv4 Access Control List</span>
<span class="t" style="left:23.2px;top:139px;color:#cecece;letter-spacing:-0.212px;-webkit-text-stroke:.3px;">IPv4 DoS Policy</span>
<span class="t" style="left:23.2px;top:162px;color:#cecece;letter-spacing:-0.0px;-webkit-text-stroke:.3px;">Authentication Rules</span>
<span class="t" style="left:23.2px;top:184px;color:#cecece;letter-spacing:-0.286px;-webkit-text-stroke:.3px;">Addresses</span>
<span class="t" style="left:23.2px;top:206px;color:#cecece;letter-spacing:-0.145px;-webkit-text-stroke:.3px;">ZTNA</span>
<span class="t" style="left:23.2px;top:228px;color:#cecece;letter-spacing:-0.016px;-webkit-text-stroke:.3px;">Internet Service Database</span>
<span class="t" style="left:23.2px;top:250px;color:#cecece;letter-spacing:-0.241px;-webkit-text-stroke:.3px;">Services</span>
<span class="t" style="left:23.2px;top:272px;color:#cecece;letter-spacing:-0.447px;-webkit-text-stroke:.3px;">Schedules</span>
<span class="t" style="left:23.2px;top:294px;color:#cecece;letter-spacing:0.076px;-webkit-text-stroke:.3px;">Virtual IPs</span>
<span class="t" style="left:23.2px;top:316px;color:#cecece;letter-spacing:-0.369px;-webkit-text-stroke:.3px;">IP Pools</span>
<span class="t" style="left:23.2px;top:338px;color:#cecece;letter-spacing:0.005px;-webkit-text-stroke:.3px;">Protocol Options</span>
<span class="t" style="left:23.2px;top:361px;color:#cecece;letter-spacing:-0.155px;-webkit-text-stroke:.3px;">Traffic Shaping</span>
<span class="t" style="left:23.2px;top:383px;color:#d8d8d8;letter-spacing:-0.012px;-webkit-text-stroke:.3px;">Security Profiles</span>
<span class="t" style="left:23.2px;top:405px;color:#d8d8d8;letter-spacing:-0.413px;-webkit-text-stroke:.3px;">VPN</span>
<span class="t" style="left:23.2px;top:427px;color:#d8d8d8;letter-spacing:0.105px;-webkit-text-stroke:.3px;">User &amp; Authentication</span>
<span class="t" style="left:23.2px;top:449px;color:#d8d8d8;letter-spacing:0.014px;-webkit-text-stroke:.3px;">WiFi &amp; Switch Controller</span>
<span class="t" style="left:23.2px;top:471px;color:#d8d8d8;letter-spacing:-0.237px;-webkit-text-stroke:.3px;">System</span>
<span class="t" style="left:23.2px;top:493px;color:#d8d8d8;letter-spacing:-0.054px;-webkit-text-stroke:.3px;">Security Fabric</span>
<span class="t" style="left:149.9px;top:493px;color:#fff;font-size:10px;line-height:10px;letter-spacing:0px;-webkit-text-stroke:.15px;">1</span>
<span class="t" style="left:23.2px;top:515px;color:#d8d8d8;letter-spacing:-0.139px;-webkit-text-stroke:.3px;">Log &amp; Report</span>
<span class="t" style="left:190.7px;top:29px;color:#1e1e1e;font-size:11.5px;line-height:11.5px;letter-spacing:-0.368px;-webkit-text-stroke:.2px;">Create New Policy</span>
<span class="t" style="left:202.0px;top:71px;color:#1e1e1e;letter-spacing:-0.615px;-webkit-text-stroke:.2px;">Name</span>
<span class="t" style="left:202.0px;top:96px;color:#1e1e1e;letter-spacing:-0.386px;-webkit-text-stroke:.2px;">Type</span>
<span class="t" style="left:202.0px;top:120px;color:#1e1e1e;letter-spacing:-0.064px;-webkit-text-stroke:.2px;">Incoming interface</span>
<span class="t" style="left:202.0px;top:145px;color:#1e1e1e;letter-spacing:0.03px;-webkit-text-stroke:.2px;">Outgoing interface</span>
<span class="t" style="left:202.0px;top:169px;color:#1e1e1e;letter-spacing:-0.592px;-webkit-text-stroke:.2px;">Source</span>
<span class="t" style="left:202.0px;top:194px;color:#1e1e1e;letter-spacing:-0.039px;-webkit-text-stroke:.2px;">Security posture tag</span>
<span class="t" style="left:202.0px;top:218px;color:#1e1e1e;letter-spacing:0.115px;-webkit-text-stroke:.2px;">Destination</span>
<span class="t" style="left:202.0px;top:243px;color:#1e1e1e;letter-spacing:-0.496px;-webkit-text-stroke:.2px;">Schedule</span>
<span class="t" style="left:202.0px;top:269px;color:#1e1e1e;letter-spacing:0.004px;-webkit-text-stroke:.2px;">Action</span>
<span class="t" style="left:202.0px;top:292px;color:#1e1e1e;letter-spacing:-0.216px;-webkit-text-stroke:.2px;">Inspection mode</span>
<span class="t" style="left:354.1px;top:96px;color:#fff;letter-spacing:-0.037px;-webkit-text-stroke:.15px;">Standard</span>
<span class="t" style="left:410.4px;top:96px;color:#1e1e1e;letter-spacing:-0.211px;-webkit-text-stroke:.2px;">ZTNA</span>
<span class="t" style="left:371.4px;top:243px;color:#1e1e1e;letter-spacing:-0.085px;-webkit-text-stroke:.2px;">always</span>
<span class="t" style="left:370.7px;top:267px;color:#fff;letter-spacing:-0.665px;-webkit-text-stroke:.15px;">ACCEPT</span>
<span class="t" style="left:440.5px;top:267px;color:#1e1e1e;letter-spacing:-0.554px;-webkit-text-stroke:.2px;">DENY</span>
<span class="t" style="left:354.6px;top:292px;color:#fff;letter-spacing:-0.251px;-webkit-text-stroke:.15px;">Flow-based</span>
<span class="t" style="left:421.5px;top:292px;color:#1e1e1e;letter-spacing:-0.247px;-webkit-text-stroke:.2px;">Proxy-based</span>
<span class="t" style="left:202.0px;top:330px;color:#1e1e1e;letter-spacing:0.145px;-webkit-text-stroke:.2px;">Firewall/Network Options</span>
<span class="t" style="left:202.0px;top:471px;color:#1e1e1e;letter-spacing:-0.037px;-webkit-text-stroke:.2px;">Security Profiles</span>
<span class="t" style="left:202.0px;top:360px;color:#1e1e1e;letter-spacing:-0.494px;-webkit-text-stroke:.2px;">NAT</span>
<span class="t" style="left:202.0px;top:385px;color:#1e1e1e;letter-spacing:-0.075px;-webkit-text-stroke:.2px;">IP pool configuration</span>
<span class="t" style="left:362.1px;top:385px;color:#fff;letter-spacing:-0.056px;-webkit-text-stroke:.15px;">Use Outgoing Interface Address</span>
<span class="t" style="left:529.1px;top:385px;color:#1e1e1e;letter-spacing:-0.263px;-webkit-text-stroke:.2px;">Use Dynamic IP Pool</span>
<span class="t" style="left:202.0px;top:409px;color:#1e1e1e;letter-spacing:-0.111px;-webkit-text-stroke:.2px;">Preserve source port</span>
<span class="t" style="left:202.0px;top:434px;color:#1e1e1e;letter-spacing:-0.073px;-webkit-text-stroke:.2px;">Protocol options</span>
<span class="t" style="left:372.6px;top:435px;color:#fff;font-size:8px;line-height:8px;font-weight:700;letter-spacing:-0.8px;-webkit-text-stroke:.1px;">PROT</span>
<span class="t" style="left:403.7px;top:434px;color:#1e1e1e;letter-spacing:0.095px;-webkit-text-stroke:.2px;">default</span>
<span class="t" style="left:202.0px;top:502px;color:#1e1e1e;letter-spacing:0.209px;-webkit-text-stroke:.2px;">AntiVirus</span>
<span class="t" style="left:202.0px;top:527px;color:#1e1e1e;letter-spacing:0.237px;-webkit-text-stroke:.2px;">Web filter</span>
<span class="t" style="left:202.0px;top:551px;color:#1e1e1e;letter-spacing:0.037px;-webkit-text-stroke:.2px;">DNS filter</span>
<span class="t" style="left:202.0px;top:576px;color:#1e1e1e;letter-spacing:0.056px;-webkit-text-stroke:.2px;">Application control</span>
<span class="t" style="left:202.0px;top:600px;color:#1e1e1e;letter-spacing:-0.8px;-webkit-text-stroke:.2px;">IPS</span>
<span class="t" style="left:651.5px;top:63px;color:#1e1e1e;font-size:11.5px;line-height:11.5px;letter-spacing:-0.312px;-webkit-text-stroke:.2px;">Select Entries</span>
<span class="t" style="left:656.1px;top:90px;color:#8c8c8c;letter-spacing:-0.492px;-webkit-text-stroke:.2px;">Search</span>
<span class="t" style="left:656.5px;top:113px;color:#1e1e1e;letter-spacing:0.073px;-webkit-text-stroke:.2px;">Interface</span>
<span class="t" style="left:669.6px;top:135px;color:#242424;letter-spacing:-0.8px;-webkit-text-stroke:.3px;-webkit-text-stroke:.08px;">ha</span>
<span class="t" style="left:669.6px;top:154px;color:#242424;letter-spacing:0.237px;-webkit-text-stroke:.3px;-webkit-text-stroke:.08px;">l2t.root</span>
<span class="t" style="left:669.6px;top:173px;color:#242424;letter-spacing:0.155px;-webkit-text-stroke:.3px;-webkit-text-stroke:.08px;">port1</span>
<span class="t" style="left:669.6px;top:192px;color:#242424;letter-spacing:0.239px;-webkit-text-stroke:.3px;-webkit-text-stroke:.08px;">port10</span>
<span class="t" style="left:669.6px;top:211px;color:#242424;letter-spacing:0.405px;-webkit-text-stroke:.3px;-webkit-text-stroke:.08px;">port11</span>
<span class="t" style="left:669.6px;top:230px;color:#242424;letter-spacing:0.239px;-webkit-text-stroke:.3px;-webkit-text-stroke:.08px;">port12</span>
<span class="t" style="left:669.6px;top:249px;color:#242424;letter-spacing:0.239px;-webkit-text-stroke:.3px;-webkit-text-stroke:.08px;">port13</span>
<span class="t" style="left:669.6px;top:268px;color:#242424;letter-spacing:0.239px;-webkit-text-stroke:.3px;-webkit-text-stroke:.08px;">port14</span>
<span class="t" style="left:669.6px;top:287px;color:#242424;letter-spacing:0.239px;-webkit-text-stroke:.3px;-webkit-text-stroke:.08px;">port15</span>
<span class="t" style="left:669.6px;top:306px;color:#242424;letter-spacing:0.239px;-webkit-text-stroke:.3px;-webkit-text-stroke:.08px;">port16</span>
<span class="t" style="left:669.6px;top:325px;color:#242424;letter-spacing:0.239px;-webkit-text-stroke:.3px;-webkit-text-stroke:.08px;">port17</span>
<span class="t" style="left:669.6px;top:344px;color:#242424;letter-spacing:0.239px;-webkit-text-stroke:.3px;-webkit-text-stroke:.08px;">port18</span>
<span class="t" style="left:669.6px;top:363px;color:#242424;letter-spacing:0.239px;-webkit-text-stroke:.3px;-webkit-text-stroke:.08px;">port19</span>
<span class="t" style="left:669.6px;top:382px;color:#242424;letter-spacing:0.155px;-webkit-text-stroke:.3px;-webkit-text-stroke:.08px;">port2</span>
<span class="t" style="left:669.6px;top:401px;color:#242424;letter-spacing:0.239px;-webkit-text-stroke:.3px;-webkit-text-stroke:.08px;">port20</span>
<span class="t" style="left:669.6px;top:420px;color:#242424;letter-spacing:0.239px;-webkit-text-stroke:.3px;-webkit-text-stroke:.08px;">port21</span>
<span class="t" style="left:669.6px;top:439px;color:#242424;letter-spacing:0.239px;-webkit-text-stroke:.3px;-webkit-text-stroke:.08px;">port22</span>
<span class="t" style="left:669.6px;top:458px;color:#242424;letter-spacing:0.239px;-webkit-text-stroke:.3px;-webkit-text-stroke:.08px;">port23</span>
<span class="t" style="left:669.6px;top:477px;color:#242424;letter-spacing:0.239px;-webkit-text-stroke:.3px;-webkit-text-stroke:.08px;">port24</span>
<span class="t" style="left:669.6px;top:496px;color:#242424;letter-spacing:0.155px;-webkit-text-stroke:.3px;-webkit-text-stroke:.08px;">port3</span>
<span class="t" style="left:669.6px;top:515px;color:#242424;letter-spacing:0.155px;-webkit-text-stroke:.3px;-webkit-text-stroke:.08px;">port4</span>
<span class="t" style="left:669.6px;top:534px;color:#242424;letter-spacing:0.155px;-webkit-text-stroke:.3px;-webkit-text-stroke:.08px;">port5</span>
<span class="t" style="left:669.6px;top:553px;color:#242424;letter-spacing:0.155px;-webkit-text-stroke:.3px;-webkit-text-stroke:.08px;">port6</span>
<span class="t" style="left:669.6px;top:572px;color:#242424;letter-spacing:0.155px;-webkit-text-stroke:.3px;-webkit-text-stroke:.08px;">port7</span>
<span class="t" style="left:669.6px;top:591px;color:#242424;letter-spacing:0.155px;-webkit-text-stroke:.3px;-webkit-text-stroke:.08px;">port8</span>
<span class="t" style="left:669.6px;top:610px;color:#242424;letter-spacing:0.155px;-webkit-text-stroke:.3px;-webkit-text-stroke:.08px;">port9</span>
</div>
</body></html>
